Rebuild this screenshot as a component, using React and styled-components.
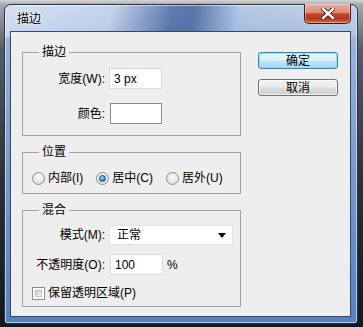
import React from 'react';
import styled, { createGlobalStyle } from 'styled-components';

const Global = createGlobalStyle`
  html, body { margin: 0; padding: 0; }
  body {
    width: 363px; height: 327px; overflow: hidden;
    background: linear-gradient(180deg, #d4d5d8 0px, #a3a7ae 5px, #555b66 50px, #2b3039 180px, #14171c 327px);
    font-family: "Liberation Sans", "Noto Sans CJK SC", sans-serif;
    font-size: 12px;
    color: #000;
  }
`;

const Desktop = styled.div`
  padding: 4px 0 0 4px;
`;

const Window = styled.div`
  box-sizing: border-box;
  width: 354px;
  height: 320px;
  border: 1px solid #2a323e;
  border-radius: 7px 7px 3px 3px;
  padding: 0 6px 6px 5px;
  display: flex;
  flex-direction: column;
  background:
    linear-gradient(100deg, rgba(255,255,255,0.45) 0%, rgba(255,255,255,0.25) 30%, rgba(20,50,120,0.5) 47%, rgba(20,50,120,0.55) 53%, rgba(255,255,255,0.05) 66%, rgba(255,255,255,0.2) 100%) top / 100% 32px no-repeat,
    linear-gradient(180deg, #b3c8e6 0%, #98b3dc 12%, #7698cd 55%, #5680be 100%);
  box-shadow: inset 0 0 0 1px rgba(255,255,255,0.55);
`;

const TitleBar = styled.div`
  height: 26px;
  display: flex;
  justify-content: space-between;
  align-items: flex-start;
`;

const Title = styled.div`
  padding: 6px 0 0 7px;
  font-family: "Noto Sans CJK SC", sans-serif;
  font-size: 12px;
  line-height: 14px;
  color: #000;
  text-shadow: 0 0 6px rgba(255,255,255,0.9), 0 0 3px rgba(255,255,255,0.9);
`;

const CloseButton = styled.div`
  box-sizing: border-box;
  margin-top: -1px;
  width: 47px;
  height: 20px;
  border: 1px solid #4a1a12;
  border-top: none;
  border-radius: 0 0 5px 5px;
  display: flex;
  align-items: center;
  justify-content: center;
  background: linear-gradient(180deg, #eab0a4 0%, #dc8a78 45%, #c4452c 52%, #b63821 78%, #d46a4c 100%);
  box-shadow: inset 0 0 0 1px rgba(255,255,255,0.35);
`;

const Client = styled.div`
  flex: 1;
  border: 1px solid #34486a;
  background: #eeeeee;
  display: flex;
  gap: 17px;
  padding: 20px 0 0 11px;
`;

const LeftColumn = styled.div`
  width: 219px;
  display: flex;
  flex-direction: column;
  gap: 16px;
`;

const Group = styled.div`
  position: relative;
  box-sizing: border-box;
  height: ${p => p.$h}px;
  border: 1px solid #a2a2a2;
  padding: ${p => p.$pad};
`;

const Legend = styled.div`
  position: absolute;
  top: -9px;
  left: 16px;
  padding: 0 3px;
  background: #eeeeee;
  line-height: 16px;
  font-size: 12px;
`;

const FieldGrid = styled.div`
  display: grid;
  grid-template-columns: 82px auto;
  column-gap: 4px;
  row-gap: ${p => p.$gap}px;
  align-items: center;
  justify-items: start;
`;

const Label = styled.div`
  justify-self: end;
  white-space: nowrap;
  line-height: 16px;
`;

const TextBox = styled.div`
  box-sizing: border-box;
  width: 53px;
  height: 21px;
  margin-left: ${p => p.$ml || 0}px;
  border: 1px solid #dadada;
  background: #fff;
  padding-left: 4px;
  display: flex;
  align-items: center;
  line-height: 16px;
`;

const Swatch = styled.div`
  box-sizing: border-box;
  width: 52px;
  height: 21px;
  margin-left: 1px;
  border: 1px solid #8a8a8a;
  background: #fff;
`;

const Select = styled.div`
  box-sizing: border-box;
  width: 124px;
  height: 20px;
  border: 1px solid #e2e2e2;
  background: #fff;
  padding: 0 6px 0 7px;
  display: flex;
  align-items: center;
  justify-content: space-between;
  line-height: 16px;
`;

const Arrow = styled.span`
  width: 0;
  height: 0;
  border-left: 4px solid transparent;
  border-right: 4px solid transparent;
  border-top: 5px solid #000;
`;

const Inline = styled.div`
  display: flex;
  align-items: center;
  gap: ${p => p.$gap}px;
`;

const RadioRow = styled.div`
  display: flex;
  align-items: center;
  gap: 13px;
  height: 16px;
`;

const Option = styled.label`
  display: flex;
  align-items: center;
  gap: 3px;
  line-height: 16px;
  white-space: nowrap;
`;

const RadioDot = styled.span`
  box-sizing: border-box;
  width: 13px;
  height: 13px;
  border-radius: 50%;
  border: 1px solid #8e8f8f;
  background: radial-gradient(circle at 50% 40%, #fbfbfb 0%, #e6e6e6 60%, #cfcfcf 100%);
  display: flex;
  align-items: center;
  justify-content: center;
  &::after {
    content: "";
    display: ${p => (p.$on ? 'block' : 'none')};
    width: 7px;
    height: 7px;
    box-sizing: border-box;
    border-radius: 50%;
    border: 1px solid #1d4f72;
    background: radial-gradient(circle at 40% 35%, #c8f0ff 0%, #3aa6dc 45%, #0d5b8c 100%);
  }
`;

const CheckRow = styled.label`
  grid-column: 1 / span 2;
  display: flex;
  align-items: center;
  gap: 3px;
  height: 16px;
  margin-top: 1px;
  padding-left: 9px;
  line-height: 16px;
  white-space: nowrap;
`;

const CheckBox = styled.span`
  box-sizing: border-box;
  width: 13px;
  height: 13px;
  border: 1px solid #8e8f8f;
  background: #fff;
  padding: 2px;
  &::after {
    content: "";
    display: block;
    width: 100%;
    height: 100%;
    background: linear-gradient(135deg, #cbcbcb 0%, #e4e4e4 60%, #f4f4f4 100%);
    border: 1px solid #c2c2c2;
    box-sizing: border-box;
  }
`;

const ButtonColumn = styled.div`
  width: 80px;
  display: flex;
  flex-direction: column;
  gap: 10px;
`;

const Button = styled.div`
  box-sizing: border-box;
  height: 17px;
  border: 1px solid ${p => (p.$primary ? '#3c7fb1' : '#707070')};
  border-radius: 3px;
  display: flex;
  align-items: center;
  justify-content: center;
  line-height: 14px;
  font-size: 12px;
  background: ${p => (p.$primary
    ? 'linear-gradient(180deg, #eaf6fd 0%, #d9f0fc 48%, #bee6fd 52%, #a7d9f5 100%)'
    : 'linear-gradient(180deg, #f2f2f2 0%, #ebebeb 48%, #dddddd 52%, #cfcfcf 100%)')};
  box-shadow: inset 0 0 0 1px ${p => (p.$primary ? 'rgba(120,220,255,0.7)' : 'rgba(255,255,255,0.7)')};
`;

function CloseGlyph() {
  return (
    <svg width="14" height="11" viewBox="0 0 14 11">
      <path d="M2 1 L12 10 M12 1 L2 10" stroke="#4b1b12" strokeWidth="4.2" strokeLinecap="square" />
      <path d="M2 1 L12 10 M12 1 L2 10" stroke="#ffffff" strokeWidth="2.4" strokeLinecap="square" />
    </svg>
  );
}

export default function App() {
  return (
    <>
      <Global />
      <Desktop>
        <Window>
          <TitleBar>
            <Title>描边</Title>
            <CloseButton><CloseGlyph /></CloseButton>
          </TitleBar>
          <Client>
            <LeftColumn>
              <Group $h={84} $pad="15px 0 0 0">
                <Legend>描边</Legend>
                <FieldGrid $gap={14}>
                  <Label>宽度(W):</Label>
                  <TextBox>3 px</TextBox>
                  <Label>颜色:</Label>
                  <Swatch />
                </FieldGrid>
              </Group>
              <Group $h={42} $pad="17px 0 0 9px">
                <Legend>位置</Legend>
                <RadioRow>
                  <Option><RadioDot />内部(I)</Option>
                  <Option><RadioDot $on />居中(C)</Option>
                  <Option><RadioDot />居外(U)</Option>
                </RadioRow>
              </Group>
              <Group $h={97} $pad="14px 0 0 0">
                <Legend>混合</Legend>
                <FieldGrid $gap={9}>
                  <Label>模式(M):</Label>
                  <Select>正常<Arrow /></Select>
                  <Label>不透明度(O):</Label>
                  <Inline $gap={4}>
                    <TextBox $ml={1}>100</TextBox>
                    <span>%</span>
                  </Inline>
                  <CheckRow><CheckBox />保留透明区域(P)</CheckRow>
                </FieldGrid>
              </Group>
            </LeftColumn>
            <ButtonColumn>
              <Button $primary>确定</Button>
              <Button>取消</Button>
            </ButtonColumn>
          </Client>
        </Window>
      </Desktop>
    </>
  );
}
